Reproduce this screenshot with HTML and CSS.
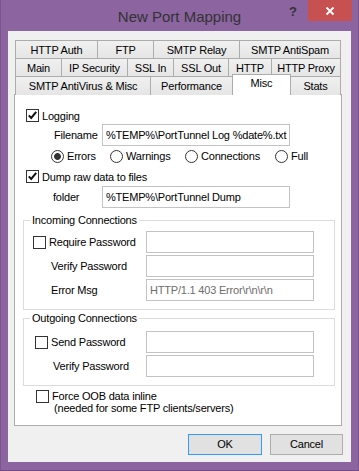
FILE: index.html
```html
<!DOCTYPE html>
<html>
<head>
	<link rel="stylesheet" href="styles.css">
</head>
<body>
	<div class="window">
		<div class="titlebar">
			<span></span>
			<span class="title">New Port Mapping</span>
			<span class="caption">
				<span class="help">?</span>
				<span class="close">
					<svg width="10" height="10" viewBox="0 0 10 10"><path d="M1.5 1.5 L8.5 8.5 M8.5 1.5 L1.5 8.5" stroke="#fff" stroke-width="1.8"/></svg>
				</span>
			</span>
		</div>
		<div class="client">
			<div class="tabs">
				<div class="tabrow r1">
					<div class="tab">HTTP Auth</div>
					<div class="tab">FTP</div>
					<div class="tab">SMTP Relay</div>
					<div class="tab">SMTP AntiSpam</div>
				</div>
				<div class="tabrow r2">
					<div class="tab">Main</div>
					<div class="tab">IP Security</div>
					<div class="tab">SSL In</div>
					<div class="tab">SSL Out</div>
					<div class="tab">HTTP</div>
					<div class="tab">HTTP Proxy</div>
				</div>
				<div class="tabrow r3">
					<div class="tab">SMTP AntiVirus &amp; Misc</div>
					<div class="tab">Performance</div>
					<div class="tab on">Misc</div>
					<div class="tab">Stats</div>
				</div>
			</div>
			<div class="panel">
				<div class="check-row first">
					<span class="chk checked"><svg width="11" height="11" viewBox="0 0 11 11"><path d="M1.8 5.4 L4.2 8 L9.2 1.8" fill="none" stroke="#111" stroke-width="2"/></svg></span>
					<span>Logging</span>
				</div>
				<div class="field">
					<span>Filename</span>
					<span class="input">%TEMP%\PortTunnel Log %date%.txt</span>
				</div>
				<div class="radios">
					<span class="opt"><span class="radio on"></span>Errors</span>
					<span class="opt"><span class="radio"></span>Warnings</span>
					<span class="opt"><span class="radio"></span>Connections</span>
					<span class="opt"><span class="radio"></span>Full</span>
				</div>
				<div class="check-row dump">
					<span class="chk checked"><svg width="11" height="11" viewBox="0 0 11 11"><path d="M1.8 5.4 L4.2 8 L9.2 1.8" fill="none" stroke="#111" stroke-width="2"/></svg></span>
					<span>Dump raw data to files</span>
				</div>
				<div class="field folder">
					<span>folder</span>
					<span class="input">%TEMP%\PortTunnel Dump</span>
				</div>

				<fieldset class="group incoming">
					<legend>Incoming Connections</legend>
					<div class="grid">
						<span class="opt"><span class="chk"></span>Require Password</span>
						<span class="input"></span>
						<span class="sub">Verify Password</span>
						<span class="input"></span>
						<span class="sub">Error Msg</span>
						<span class="input muted">HTTP/1.1 403 Error\r\n\r\n</span>
					</div>
				</fieldset>

				<fieldset class="group outgoing">
					<legend>Outgoing Connections</legend>
					<div class="grid">
						<span class="opt"><span class="chk"></span>Send Password</span>
						<span class="input"></span>
						<span class="sub">Verify Password</span>
						<span class="input"></span>
					</div>
				</fieldset>

				<div class="oob">
					<span class="chk"></span>
					<span class="oob-text">Force OOB data inline<br><span class="note">(needed for some FTP clients/servers)</span></span>
				</div>
			</div>
			<div class="buttons">
				<span class="btn default">OK</span>
				<span class="btn">Cancel</span>
			</div>
		</div>
	</div>
</body>
</html>
```

FILE: styles.css
```css
html, body {
	margin: 0;
	padding: 0;
	background: #8b64a0;
}
body {
	font-family: "Liberation Sans", Arial, sans-serif;
	font-size: 11px;
	letter-spacing: -0.2px;
	color: #000;
}
.window {
	width: 359px;
	height: 471px;
	box-sizing: border-box;
	padding: 0 8px 9px 8px;
	background: #8b64a0;
	border-left: 1px solid #7a5690;
	border-bottom: 1px solid #6f4d84;
	border-right: 1px solid #7a5690;
	padding-left: 7px;
	padding-right: 7px;
	padding-bottom: 8px;
}
.titlebar {
	height: 31px;
	display: grid;
	grid-template-columns: 1fr auto 1fr;
	margin: 0 -8px 0 -8px;
}
.title {
	font-size: 15px;
	letter-spacing: 0;
	line-height: 31px;
	padding-top: 1px;
	color: #333;
}
.caption {
	display: flex;
	justify-content: flex-end;
	align-items: flex-start;
	padding-right: 7px;
}
.help {
	font-size: 13px;
	font-weight: bold;
	color: #333;
	line-height: 14px;
	margin-top: 5px;
	margin-right: 11px;
	letter-spacing: 0;
}
.close {
	width: 44px;
	height: 21px;
	background: #c75050;
	display: flex;
	align-items: center;
	justify-content: center;
}
.client {
	background: #f0f0f0;
	height: 431px;
	box-sizing: border-box;
	padding: 9px 9px 0 6px;
}

/* tabs */
.tabs {
	margin-left: 1px;
	width: 325px;
}
.tabrow {
	display: grid;
	height: 18px;
}
.r1 { grid-template-columns: 82px 56px 86px 101px; }
.r2 { grid-template-columns: 46px 66px 46px 55px 43px 69px; }
.r3 { grid-template-columns: 135px 82px 58px 50px; position: relative; z-index: 1; }
.tab {
	border: 1px solid #acacac;
	border-bottom: none;
	margin-right: -1px;
	background: linear-gradient(#f0f0f0, #e5e5e5);
	text-align: center;
	line-height: 17px;
	padding-top: 1px;
	white-space: nowrap;
}
.tab.on {
	background: #fff;
	margin-top: -2px;
	height: 20px;
	line-height: 17px;
	padding-top: 0;
}

/* panel */
.panel {
	background: #fff;
	border: 1px solid #acacac;
	height: 330px;
}
.check-row {
	display: flex;
	align-items: center;
	height: 13px;
	padding-left: 11px;
	gap: 3px;
}
.check-row.first { margin-top: 14px; }
.check-row.dump { margin-top: 7px; }
.chk {
	width: 11px;
	height: 11px;
	border: 1px solid #333;
	background: #fff;
	flex-shrink: 0;
	display: inline-flex;
	align-items: center;
	justify-content: center;
}
.radio {
	width: 11px;
	height: 11px;
	border: 1px solid #333;
	border-radius: 50%;
	background: #fff;
	display: inline-block;
	margin-right: 3px;
	box-sizing: content-box;
}
.radio.on {
	background: radial-gradient(circle, #333 0, #333 3px, #fff 3.8px);
}
.field {
	display: grid;
	grid-template-columns: 48px 188px;
	align-items: center;
	padding-left: 39px;
	margin-top: 2px;
	height: 22px;
}
.field.folder {
	margin-top: 3px;
	padding-left: 38px;
	grid-template-columns: 49px 188px;
}
.input {
	display: block;
	box-sizing: border-box;
	height: 22px;
	border: 1px solid #c3c3c3;
	background: #fff;
	padding-left: 3px;
	line-height: 20px;
	white-space: nowrap;
	overflow: hidden;
}
.input.muted { color: #6d6d6d; }
.radios {
	display: grid;
	grid-template-columns: 59px 75px 90px auto;
	padding-left: 36px;
	margin-top: 3px;
	height: 14px;
	align-items: center;
}
.opt {
	display: flex;
	align-items: center;
}

/* group boxes */
.group {
	border: 1px solid #dcdcdc;
	padding: 0;
	margin: 5px 6px 0 8px;
}
.group legend {
	margin-left: 6px;
	padding: 0 2px;
	line-height: 14px;
}
.group .grid {
	display: grid;
	grid-template-columns: 113px 168px;
	grid-auto-rows: 22px;
	row-gap: 2px;
	align-items: center;
	padding: 4px 0 8px 9px;
}
.group .opt .chk { margin-right: 3px; }
.group .sub { padding-left: 18px; }
.group.outgoing { margin-top: 1px; }
.group.outgoing .grid {
	padding: 6px 0 8px 11px;
	grid-template-columns: 111px 168px;
}

.oob {
	display: flex;
	align-items: flex-start;
	gap: 3px;
	padding-left: 21px;
	margin-top: 4px;
}
.oob-text { line-height: 12px; }
.oob .note { padding-left: 2px; }

/* buttons */
.buttons {
	display: flex;
	justify-content: flex-end;
	gap: 8px;
	margin: 8px -1px 0 0;
}
.btn {
	width: 73px;
	height: 21px;
	box-sizing: border-box;
	border: 1px solid #adadad;
	background: #e1e1e1;
	text-align: center;
	line-height: 19px;
}
.btn.default { border-color: #3399ff; width: 74px; }
```
